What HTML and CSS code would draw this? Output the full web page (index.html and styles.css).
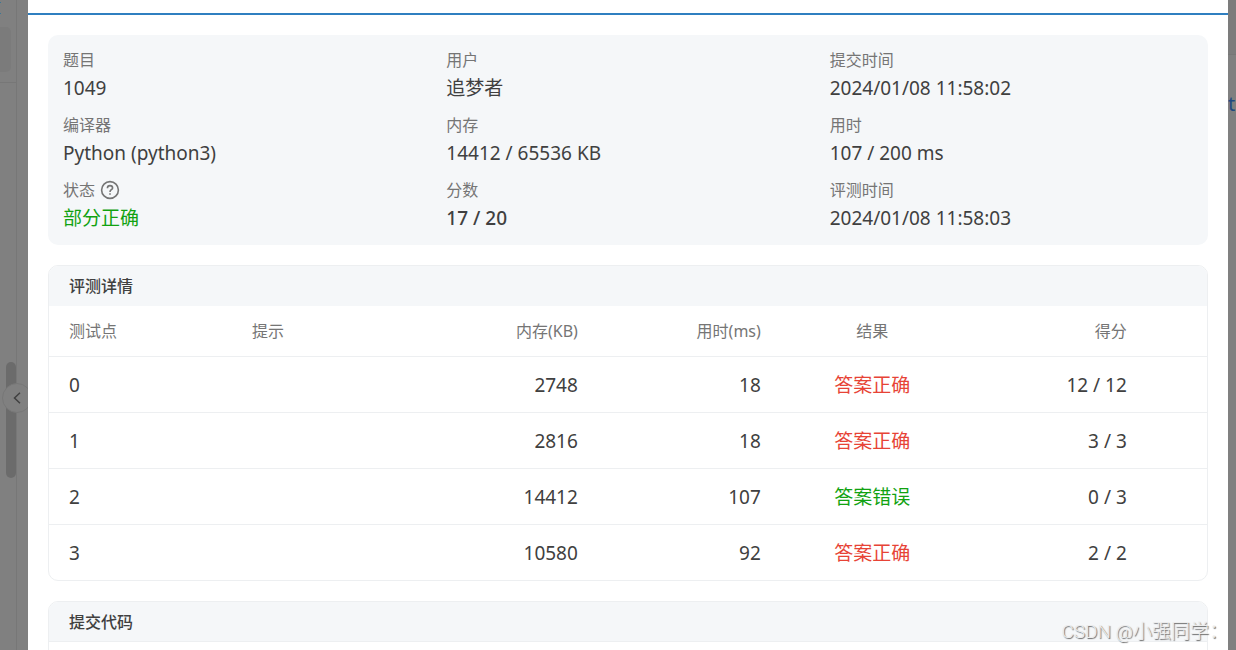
FILE: index.html
```html
<!DOCTYPE html>
<html lang="zh-CN">
<head>
<meta charset="utf-8">
<title>评测详情</title>
<link rel="stylesheet" href="styles.css">
</head>
<body>
<div class="screen">
  <aside class="side">
    <div class="side-item"></div>
    <div class="side-rule"></div>
    <div class="scroll-thumb"></div>
    <span class="link-edge"></span>
    <button class="collapse" type="button" aria-label="收起">
      <svg width="8" height="12" viewBox="0 0 8 12" fill="none" stroke="#404040" stroke-width="1.5"><path d="M7 .8 1.5 6 7 11.2"/></svg>
    </button>
  </aside>
  <main class="dialog">
    <div class="dialog-top"></div>
    <div class="content">
      <dl class="summary">
        <div><dt>题目</dt><dd>1049</dd></div>
        <div><dt>用户</dt><dd>追梦者</dd></div>
        <div><dt>提交时间</dt><dd>2024/01/08 11:58:02</dd></div>
        <div><dt>编译器</dt><dd>Python (python3)</dd></div>
        <div><dt>内存</dt><dd>14412 / 65536 KB</dd></div>
        <div><dt>用时</dt><dd>107 / 200 ms</dd></div>
        <div>
          <dt>状态
            <svg class="help" width="20" height="20" viewBox="0 0 20 20" fill="none" stroke="#757575" stroke-width="1.6"><circle cx="10" cy="10" r="8.4"/><path d="M7.4 8.2C7.4 6.5 8.5 5.6 10 5.6s2.6.9 2.6 2.3c0 1.8-2.6 1.9-2.6 4"/><path d="M10 13.2v1.6"/></svg>
          </dt>
          <dd class="ok">部分正确</dd>
        </div>
        <div><dt>分数</dt><dd class="strong">17 / 20</dd></div>
        <div><dt>评测时间</dt><dd>2024/01/08 11:58:03</dd></div>
      </dl>
      <section class="card">
        <h2>评测详情</h2>
        <table>
          <thead>
            <tr><th>测试点</th><th>提示</th><th class="num">内存(KB)</th><th class="num">用时(ms)</th><th class="mid">结果</th><th class="num">得分</th><th class="rest"></th></tr>
          </thead>
          <tbody>
            <tr><td>0</td><td></td><td class="num">2748</td><td class="num">18</td><td class="mid bad">答案正确</td><td class="num">12 / 12</td><td></td></tr>
            <tr><td>1</td><td></td><td class="num">2816</td><td class="num">18</td><td class="mid bad">答案正确</td><td class="num">3 / 3</td><td></td></tr>
            <tr><td>2</td><td></td><td class="num">14412</td><td class="num">107</td><td class="mid ok">答案错误</td><td class="num">0 / 3</td><td></td></tr>
            <tr><td>3</td><td></td><td class="num">10580</td><td class="num">92</td><td class="mid bad">答案正确</td><td class="num">2 / 2</td><td></td></tr>
          </tbody>
        </table>
      </section>
      <section class="card">
        <h2 class="ruled">提交代码</h2>
        <div class="code"></div>
      </section>
    </div>
  </main>
  <div class="behind"><span>t</span></div>
  <div class="watermark">CSDN @小强同学<span class="colon">：</span></div>
</div>
</body>
</html>
```
FILE: styles.css
```css
* {
  box-sizing: border-box;
}

body {
  margin: 0;
  background: #808080;
  color: #404040;
  font-family: "Noto Sans", "Noto Sans CJK SC", sans-serif;
  font-size: 19px;
}

.screen {
  position: relative;
  display: grid;
  grid-template-columns: 28px 1fr 8px;
  height: 100vh;
  overflow: hidden;
}

.side {
  position: relative;
  background: linear-gradient(to right, #808080 16px, #777 16px, #777 17px, #808080 17px);
}

.side-item {
  width: 11px;
  height: 45px;
  margin-top: 27px;
  border-radius: 0 5px 5px 0;
  background: #7b7b7b;
}

.side-rule {
  width: 16px;
  height: 1px;
  margin-top: 10px;
  background: #777;
}

.scroll-thumb {
  position: absolute;
  left: 6px;
  top: 362px;
  width: 10px;
  height: 116px;
  border-radius: 5px;
  background: #6b6b6b;
}

.link-edge {
  position: absolute;
  left: 0;
  top: 2px;
  width: 1px;
  height: 12px;
  border: solid #3b7795;
  border-width: 1px 0;
}

.collapse {
  position: absolute;
  left: 2px;
  top: 383px;
  display: flex;
  align-items: center;
  justify-content: center;
  width: 30px;
  height: 30px;
  padding: 0;
  border: 1px solid #777;
  border-radius: 50%;
  background: #808080;
}

.dialog {
  z-index: 1;
  overflow: hidden;
  background: #fff;
}

.dialog-top {
  height: 15px;
  border-bottom: 2px solid #2f7fc0;
}

.content {
  display: flex;
  flex-direction: column;
  gap: 20px;
  padding: 20px;
}

.summary {
  display: grid;
  grid-template-columns: repeat(3, 1fr);
  gap: 9px 20px;
  margin: 0;
  padding: 12px 15px;
  border-radius: 10px;
  background: #f5f7f9;
}

dt {
  display: flex;
  align-items: center;
  gap: 5px;
  color: #757575;
  font-size: 16px;
  line-height: 26px;
}

dd {
  margin: 0;
  line-height: 30px;
}

.strong {
  font-weight: 500;
}

.ok {
  color: #11a211;
}

.bad {
  color: #e74336;
}

.card {
  overflow: hidden;
  border: 1px solid #edeff1;
  border-radius: 10px;
}

h2 {
  height: 40px;
  margin: 0;
  padding: 0 20px;
  background: #f5f7f9;
  font-size: 16px;
  font-weight: 500;
  line-height: 40px;
}

.ruled {
  border-bottom: 1px solid #edeff1;
}

.code {
  height: 200px;
}

table {
  width: 100%;
  table-layout: fixed;
  border-spacing: 0;
}

th,
td {
  padding: 2px 20px 0;
  border-bottom: 1px solid #edeff1;
  text-align: left;
  line-height: 53px;
  white-space: nowrap;
}

th {
  padding-top: 0;
  color: #757575;
  font-size: 16px;
  font-weight: 400;
  line-height: 50px;
}

tbody tr:last-child td {
  border-bottom: 0;
}

.num {
  text-align: right;
}

.mid {
  text-align: center;
}

.rest {
  width: 5.2%;
}

.behind {
  overflow: hidden;
  padding-top: 90px;
  background: linear-gradient(#7c7c7c 54px, #777 54px, #777 55px, #808080 55px);
  color: #1f4a80;
  font-size: 20px;
  line-height: 28px;
}

.watermark {
  position: absolute;
  right: 8px;
  bottom: 4px;
  z-index: 2;
  color: #ededed;
  font-family: Roboto, "Noto Sans CJK SC", sans-serif;
  font-size: 19px;
  font-weight: 300;
  line-height: 28px;
  text-shadow: 1px 1px 1px #666;
}

.colon {
  font-family: "Noto Sans CJK TC", sans-serif;
}
```
